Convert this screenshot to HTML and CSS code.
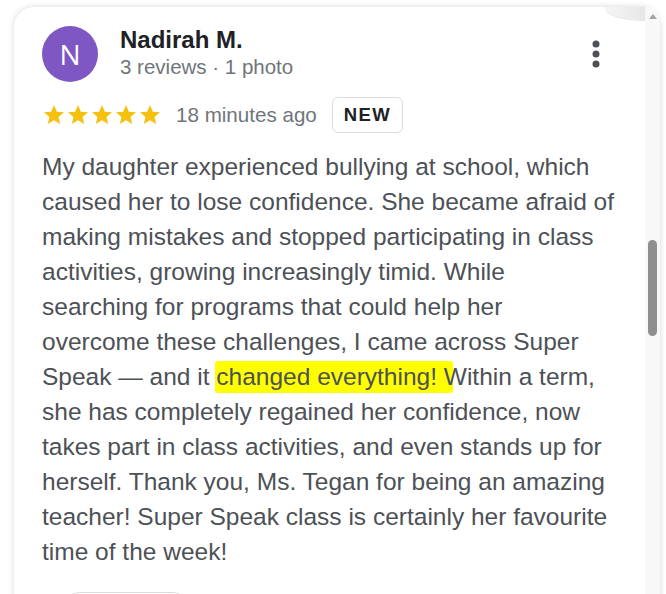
FILE: index.html
```html
<!DOCTYPE html>
<html lang="en">
<head>
<meta charset="utf-8">
<title>Review</title>
<link rel="stylesheet" href="styles.css">
</head>
<body>
<div class="card">
  <div class="curl"></div>
  <div class="content">
    <div class="header">
      <div class="avatar">N</div>
      <div class="who">
        <div class="name">Nadirah M.</div>
        <div class="meta">3 reviews · 1 photo</div>
      </div>
      <svg class="menu" width="8" height="30" viewBox="0 0 8 30">
        <circle cx="4" cy="4" r="3.5"/>
        <circle cx="4" cy="14" r="3.5"/>
        <circle cx="4" cy="24" r="3.5"/>
      </svg>
    </div>
    <div class="rating">
      <div class="stars">
        <svg viewBox="0 0 24 24"><path d="M12 17.27L18.18 21l-1.64-7.03L22 9.24l-7.19-.61L12 2 9.19 8.63 2 9.24l5.46 4.73L5.82 21z"/></svg>
        <svg viewBox="0 0 24 24"><path d="M12 17.27L18.18 21l-1.64-7.03L22 9.24l-7.19-.61L12 2 9.19 8.63 2 9.24l5.46 4.73L5.82 21z"/></svg>
        <svg viewBox="0 0 24 24"><path d="M12 17.27L18.18 21l-1.64-7.03L22 9.24l-7.19-.61L12 2 9.19 8.63 2 9.24l5.46 4.73L5.82 21z"/></svg>
        <svg viewBox="0 0 24 24"><path d="M12 17.27L18.18 21l-1.64-7.03L22 9.24l-7.19-.61L12 2 9.19 8.63 2 9.24l5.46 4.73L5.82 21z"/></svg>
        <svg viewBox="0 0 24 24"><path d="M12 17.27L18.18 21l-1.64-7.03L22 9.24l-7.19-.61L12 2 9.19 8.63 2 9.24l5.46 4.73L5.82 21z"/></svg>
      </div>
      <span class="time">18 minutes ago</span>
      <span class="badge">NEW</span>
    </div>
    <p class="text">My daughter experienced bullying at school, which<br>caused her to lose confidence. She became afraid of<br>making mistakes and stopped participating in class<br>activities, growing increasingly timid. While<br>searching for programs that could help her<br>overcome these challenges, I came across Super<br>Speak — and it <span class="hl">changed everything! </span>Within a term,<br>she has completely regained her confidence, now<br>takes part in class activities, and even stands up for<br>herself. Thank you, Ms. Tegan for being an amazing<br>teacher! Super Speak class is certainly her favourite<br>time of the week!</p>
    <div class="button"></div>
  </div>
  <div class="scrollbar">
    <div class="arrow"></div>
    <div class="thumb"></div>
  </div>
</div>
</body>
</html>
```

FILE: styles.css
```css
html, body {
  margin: 0;
  background: #ffffff;
  overflow: hidden;
}
body {
  padding: 7px 0 0 14px;
  font-family: "Liberation Sans", Arial, sans-serif;
}
.card {
  position: relative;
  display: flex;
  width: 646px;
  height: 640px;
  background: #fff;
  border-radius: 20px 20px 0 0;
  box-shadow: 0 0 6px rgba(0, 0, 0, 0.16);
}
.curl {
  position: absolute;
  top: 0;
  right: 15px;
  width: 40px;
  height: 13px;
  background: linear-gradient(90deg, #f6f6f6, #e6e6e6);
  border-bottom-left-radius: 40px 13px;
  box-shadow: 0 1px 1px rgba(0, 0, 0, 0.12);
}
.content {
  flex: 1;
  padding: 19px 0 0 28px;
}
.header {
  display: flex;
  align-items: flex-start;
}
.avatar {
  width: 56px;
  height: 56px;
  border-radius: 50%;
  background: #7e57c2;
  color: #fff;
  font-family: "Open Sans", "Liberation Sans", sans-serif;
  font-size: 28px;
  display: flex;
  align-items: center;
  justify-content: center;
  flex-shrink: 0;
}
.who {
  margin-left: 22px;
}
.name {
  font-size: 24px;
  font-weight: bold;
  line-height: 28px;
  color: #202124;
}
.meta {
  font-size: 20.5px;
  line-height: 26px;
  color: #70757a;
}
.menu {
  margin-left: auto;
  margin-right: 45px;
  margin-top: 14px;
  fill: #4d5156;
}
.rating {
  display: flex;
  align-items: center;
  margin-top: 15px;
  height: 36px;
}
.stars {
  display: flex;
}
.stars svg {
  width: 24px;
  height: 24px;
  fill: #f4c10f;
}
.time {
  margin-left: 14px;
  font-size: 20.6px;
  color: #70757a;
}
.badge {
  margin-left: 15px;
  height: 34px;
  padding: 0 11px;
  border: 1px solid #dadce0;
  border-radius: 6px;
  display: flex;
  align-items: center;
  font-size: 18.5px;
  font-weight: bold;
  letter-spacing: 1.3px;
  color: #202124;
}
.text {
  margin: 16px 0 0;
  font-size: 24.5px;
  line-height: 35px;
  color: #4d5156;
  white-space: nowrap;
}
.hl {
  background: #ffff00;
  border-radius: 3px;
  padding: 2px 9px 3px 1px;
  margin: 0 -9px 0 -1px;
}
.button {
  margin: 23px 0 0 20px;
  width: 126px;
  height: 36px;
  border: 1px solid #dadce0;
  border-radius: 18px;
}
.scrollbar {
  width: 15px;
  background: #f8f8f8;
  border-top-right-radius: 20px;
  display: flex;
  flex-direction: column;
  align-items: center;
}
.arrow {
  margin-top: 7px;
  width: 0;
  height: 0;
  border-left: 4px solid transparent;
  border-right: 4px solid transparent;
  border-bottom: 5px solid #a3a3a3;
}
.thumb {
  margin-top: 221px;
  width: 9px;
  height: 96px;
  border-radius: 5px;
  background: #8f8f8f;
}
```
